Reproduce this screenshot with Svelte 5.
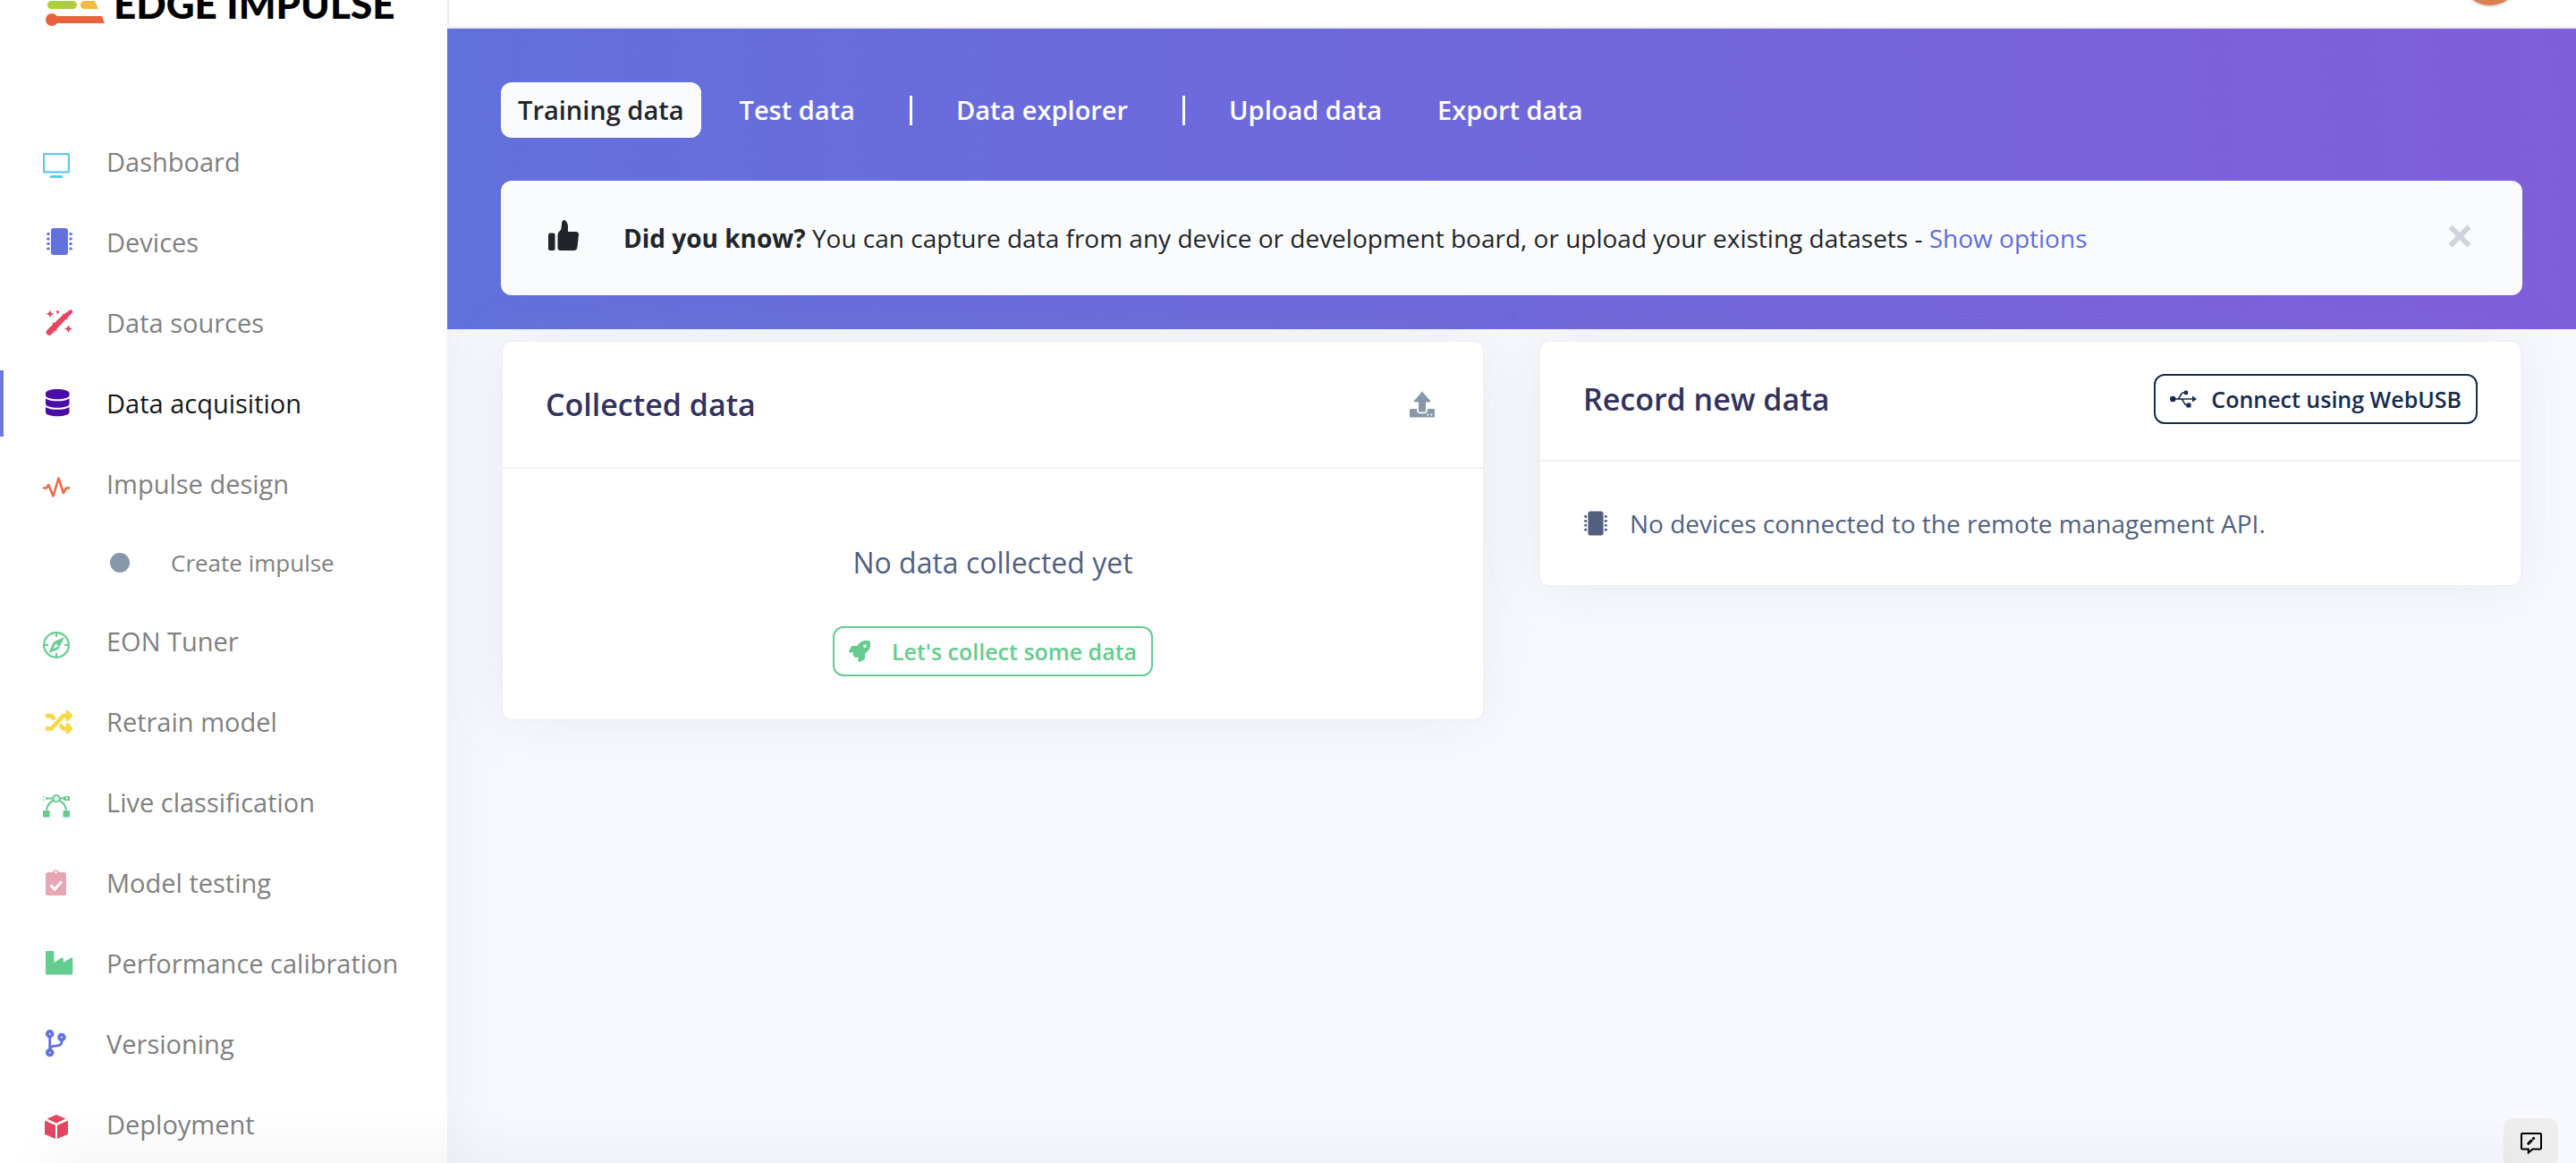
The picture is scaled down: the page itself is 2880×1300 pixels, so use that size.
<script>
  const nav = [
    { label: 'Dashboard', icon: 'screen', color: '#5bcbea' },
    { label: 'Devices', icon: 'chip', color: '#6371dc' },
    { label: 'Data sources', icon: 'wand', color: '#e4475f' },
    { label: 'Data acquisition', icon: 'database', color: '#4a0ca6', active: true },
    { label: 'Impulse design', icon: 'pulse', color: '#ec6a48' },
    { label: 'Create impulse', icon: 'dot', color: '#8898aa', sub: true },
    { label: 'EON Tuner', icon: 'compass', color: '#65cc90' },
    { label: 'Retrain model', icon: 'shuffle', color: '#fad643' },
    { label: 'Live classification', icon: 'bezier', color: '#65cc90' },
    { label: 'Model testing', icon: 'clipboard', color: '#e8a5b4' },
    { label: 'Performance calibration', icon: 'factory', color: '#65cc90' },
    { label: 'Versioning', icon: 'branch', color: '#6371dc' },
    { label: 'Deployment', icon: 'box', color: '#e4475f' }
  ];
  const tabs = [
    { label: 'Training data', active: true },
    { label: 'Test data', divider: true },
    { label: 'Data explorer', divider: true },
    { label: 'Upload data' },
    { label: 'Export data' }
  ];
  let showTip = $state(true);
</script>

{#snippet chip()}
  <rect x="6" y="0" width="19" height="30" rx="3" />
  <path d="M4.500 5h-2l-2 1.500 2 1.500h2zM4.500 10.500h-2l-2 1.500 2 1.500h2zM4.500 16h-2l-2 1.500 2 1.500h2zM4.500 21.500h-2l-2 1.500 2 1.500h2zM26.500 5h2l2 1.500-2 1.500h-2zM26.500 10.500h2l2 1.500-2 1.500h-2zM26.500 16h2l2 1.500-2 1.500h-2zM26.500 21.500h2l2 1.500-2 1.500h-2z" />
{/snippet}

{#snippet icon(name)}
  {#if name === 'screen'}
    <path d="M1.500 0h27A1.500 1.500 0 0 1 30 1.500v19.500a1.500 1.500 0 0 1-1.500 1.500h-27A1.500 1.500 0 0 1 0 21V1.500A1.500 1.500 0 0 1 1.500 0zM2.200 2.200v18.100h25.600V2.200zM9 25h12a1.500 1.500 0 0 1 0 3H9a1.500 1.500 0 0 1 0-3z" transform="translate(0 10)" fill-rule="evenodd" />
  {:else if name === 'chip'}
    <g transform="translate(3 4)">{@render chip()}</g>
  {:else if name === 'wand'}
    <g transform="translate(3 5)">
      <path d="M27.300.6a2 2 0 0 1 2.700 2.800L24.500 9l.3 1.800-2.500.4-9.800 10.200.3 2-2.500.4-4 4.200a3.500 3.500 0 0 1-5-4.800l6.500-6.300-.1-2.200 2.400.1L19 6.300l-.1-1.200 1.500.1z" />
      <path d="M5 .5l1.300 3 3 1.300-3 1.400-1.300 3-1.300-3-3-1.400 3-1.300zM13.500 0l.8 2 2 .8-2 .8-.8 2-.8-2-2-.8 2-.8zM25.500 17l1.400 3.200 3.100 1.300-3.100 1.400-1.400 3.100-1.300-3.100-3.200-1.400 3.200-1.300z" />
    </g>
  {:else if name === 'database'}
    <path transform="translate(3 4) scale(.0592)" d="M448 73.143v45.714C448 159.143 347.667 192 224 192S0 159.143 0 118.857V73.143C0 32.857 100.333 0 224 0s224 32.857 224 73.143zM448 176v102.857C448 319.143 347.667 352 224 352S0 319.143 0 278.857V176c48.125 33.143 136.208 48.572 224 48.572S399.874 209.143 448 176zm0 160v102.857C448 479.143 347.667 512 224 512S0 479.143 0 438.857V336c48.125 33.143 136.208 48.572 224 48.572S399.874 369.143 448 336z" />
  {:else if name === 'pulse'}
    <path d="M0 24.500h4l2.200-3.500 5.300 12.500 6-20 5.300 16.500 3.400-5.500H30" fill="none" stroke="currentColor" stroke-width="2.600" stroke-linejoin="round" />
  {:else if name === 'dot'}
    <circle cx="11" cy="20" r="11" />
  {:else if name === 'compass'}
    <g transform="translate(0 9)">
      <circle cx="15" cy="15" r="13.900" fill="none" stroke="currentColor" stroke-width="2.200" />
      <path d="M14 2h2v4h-2zM14 24h2v4h-2zM2 14h4v2H2zM24 14h4v2h-4z" />
      <path d="M24 6L17.500 19.500 6.500 24 12 11.500zM14.200 13.200l-2.700 6 6.200-3z" fill-rule="evenodd" />
    </g>
  {:else if name === 'shuffle'}
    <path transform="translate(3 5) scale(.0592)" d="M504.971 359.029c9.373 9.373 9.373 24.569 0 33.941l-80 79.984c-15.010 15.010-40.971 4.490-40.971-16.971V416h-58.785a12.004 12.004 0 0 1-8.773-3.812l-70.556-75.596 53.333-57.143L352 336h32v-39.981c0-21.438 25.943-31.998 40.971-16.971l80 79.981zM12 176h84l52.781 56.551 53.333-57.143-70.556-75.596A11.999 11.999 0 0 0 122.785 96H12c-6.627 0-12 5.373-12 12v56c0 6.627 5.373 12 12 12zm372 0v39.984c0 21.460 25.961 31.980 40.971 16.971l80-79.984c9.373-9.373 9.373-24.569 0-33.941l-80-79.981C409.943 24.021 384 34.582 384 56.019V96h-58.785a12.004 12.004 0 0 0-8.773 3.812L96 336H12c-6.627 0-12 5.373-12 12v56c0 6.627 5.373 12 12 12h110.785c3.326 0 6.503-1.381 8.773-3.812L352 176h32z" />
  {:else if name === 'bezier'}
    <g transform="translate(0 11)">
      <path d="M4 17.500C5 11 8.500 8 12 6.500M26 17.500C25 11 21.500 8 18 6.500" fill="none" stroke="currentColor" stroke-width="2.200" />
      <circle cx="15" cy="4.500" r="3.600" fill="none" stroke="currentColor" stroke-width="2" />
      <path d="M5 3.500h6v2H5zM19 3.500h6v2h-6z" />
      <path d="M0 2h1.500v1.200H0zM0 5.500h1.500v1.200H0zM2.500 4.400L5 2.200v4.500zM24 2h6v5h-6l-2-2.500zM26 3.300v2.300h1.600V3.300z" fill-rule="evenodd" />
      <rect x="0" y="18" width="7.500" height="7.500" rx="1.200" /><rect x="22.500" y="18" width="7.500" height="7.500" rx="1.200" />
    </g>
  {:else if name === 'clipboard'}
    <g transform="translate(3 4)">
      <path d="M2.500 4H8a3.600 3.600 0 0 1 7 0h5.500A2.500 2.500 0 0 1 23 6.500v21a2.500 2.500 0 0 1-2.500 2.500h-18A2.500 2.500 0 0 1 0 27.500v-21A2.500 2.500 0 0 1 2.500 4zM11.500 2.600a1.300 1.300 0 1 0 0 2.600 1.300 1.300 0 0 0 0-2.600z" fill-rule="evenodd" />
      <path d="M5.500 18.500l4.500 4.500 8-8.500" fill="none" stroke="#fff" stroke-width="3.200" />
    </g>
  {:else if name === 'factory'}
    <path transform="translate(3 4) scale(.0592)" d="M475.115 163.781L336 252.309v-68.280c0-18.916-20.931-30.399-36.885-20.248L160 252.309V56c0-13.255-10.745-24-24-24H24C10.745 32 0 42.745 0 56v400c0 13.255 10.745 24 24 24h464c13.255 0 24-10.745 24-24V184.029c0-18.917-20.931-30.399-36.885-20.248z" />
  {:else if name === 'branch'}
    <path transform="translate(3 4) scale(.0592)" d="M384 144c0-44.200-35.800-80-80-80s-80 35.800-80 80c0 36.400 24.300 67.100 57.500 76.800-.6 16.100-4.200 28.500-11 36.900-15.400 19.200-49.300 22.400-85.200 25.700-28.200 2.600-57.400 5.400-81.300 16.900v-144c32.500-10.200 56-40.500 56-76.300 0-44.200-35.800-80-80-80S0 35.800 0 80c0 35.800 23.500 66.100 56 76.300v199.300C23.500 365.900 0 396.200 0 432c0 44.200 35.800 80 80 80s80-35.800 80-80c0-34-21.200-63.100-51.200-74.600 3.100-5.200 7.800-9.800 14.900-13.400 16.200-8.200 40.400-10.400 66.100-12.800 42.200-3.900 90-8.400 118.200-43.400 14-17.400 21.100-39.800 21.600-67.900 31.600-10.800 54.400-40.700 54.400-75.900zM80 64c8.800 0 16 7.200 16 16s-7.200 16-16 16-16-7.200-16-16 7.200-16 16-16zm0 384c-8.800 0-16-7.200-16-16s7.200-16 16-16 16 7.200 16 16-7.200 16-16 16zm224-320c8.800 0 16 7.200 16 16s-7.200 16-16 16-16-7.200-16-16 7.200-16 16-16z" />
  {:else if name === 'box'}
    <path transform="translate(2 9)" d="M13 0l10.500 4.500L13 9.500 2.500 4.500zM0 6.500l12 5.300V27L0 21.800zM26 6.500l-12 5.300V27l12-5.200z" />
  {/if}
{/snippet}

<div class="app">
  <aside class="sidebar">
    <a class="brand" href="#home" aria-label="Edge Impulse home">
      <svg class="mark" viewBox="0 0 68 60" aria-hidden="true">
        <rect x="3" y="13" width="40" height="9" rx="4" fill="#f5ba43" />
        <rect x="2" y="32" width="33" height="9" rx="4.500" fill="#abcf3e" />
        <path d="M43.500 32H55l4 9H43.500a4.500 4.500 0 0 1 0-9z" fill="#f5ba43" />
        <circle cx="7" cy="53" r="7" fill="#e8633c" />
        <path d="M7 49h56l3 8H7z" fill="#e8633c" />
      </svg>
      <span>EDGE IMPULSE</span>
    </a>
    <nav aria-label="Main">
      {#each nav as item}
        <a href="#{item.icon}" class="link" class:active={item.active} class:sub={item.sub} aria-current={item.active ? 'page' : undefined}>
          <svg class="glyph" viewBox="0 0 36 40" aria-hidden="true" fill="currentColor" style:color={item.color}>{@render icon(item.icon)}</svg>
          <span>{item.label}</span>
        </a>
      {/each}
    </nav>
  </aside>

  <main>
    <div class="topbar"><button class="avatar" aria-label="Account"></button></div>
    <header class="hero">
      <nav class="tabs" aria-label="Data">
        {#each tabs as tab}
          <a href="#tab" class="tab" class:current={tab.active}>{tab.label}</a>
          {#if tab.divider}<span class="divider"></span>{/if}
        {/each}
      </nav>
      {#if showTip}
        <div class="tip">
          <svg class="thumb" viewBox="0 0 34 34" aria-hidden="true" fill="currentColor">
            <rect x="0" y="14.500" width="7.500" height="19.500" rx="2" />
            <path d="M10.500 17.500c0-3 1-4 2.500-5.500 2-2 1.500-4.500 2.200-9.500C15.500.8 16.500 0 17.700 0c2.300.6 4.300 3.500 4.300 7.500v5.500h9c2 0 3.200 1.300 3 3.200l-1.600 14.600c-.3 2-1.500 3.200-3.500 3.200H13.500c-2 0-3-1.200-3-3z" />
          </svg>
          <p><strong>Did you know?</strong> You can capture data from any device or development board, or upload your existing datasets - <a href="#options">Show options</a></p>
          <button class="close" aria-label="Dismiss" onclick={() => (showTip = false)}>
            <svg viewBox="0 0 24 24" aria-hidden="true"><path d="M3 3l18 18M21 3L3 21" stroke="currentColor" stroke-width="5" fill="none" /></svg>
          </button>
        </div>
      {/if}
    </header>

    <div class="cards">
      <section class="card">
        <div class="head tall">
          <h2>Collected data</h2>
          <button class="upload" aria-label="Upload data">
            <svg viewBox="0 0 40 40" fill="currentColor" aria-hidden="true">
              <path d="M20 5.500l9 10.500c.5.800 0 1.500-.8 1.500H24v9.500c0 1-.6 1.500-1.500 1.500h-5c-.9 0-1.500-.5-1.500-1.500v-9.500h-4.200c-.8 0-1.300-.7-.8-1.500z" />
              <path d="M7.500 25h6.700v2c0 2 1.300 3.300 3.300 3.300h5c2 0 3.300-1.300 3.300-3.300v-2h6.700c1 0 1.500.5 1.500 1.500v6.500c0 1-.5 1.500-1.500 1.500h-25c-1 0-1.500-.5-1.500-1.500v-6.500c0-1 .5-1.500 1.500-1.500zM25.500 30.500v2h1.800v-2zM29.500 30.500v2h1.800v-2z" fill-rule="evenodd" />
            </svg>
          </button>
        </div>
        <div class="body empty">
          <p>No data collected yet</p>
          <button class="btn green">
            <svg viewBox="0 0 512 512" fill="currentColor" aria-hidden="true"><path d="M505.120 19.094c-1.189-5.531-6.658-11-12.207-12.188C460.716 0 435.507 0 410.407 0 307.175 0 245.269 55.203 199.052 128H94.838c-16.348.016-35.557 11.875-42.887 26.484L2.516 253.297A28.400 28.400 0 0 0 0 264a24 24 0 0 0 24 24h103.816l-22.474 22.469c-11.365 11.361-12.996 32.258 0 45.250l50.904 50.906c11.156 11.187 32.156 13.156 45.277 0l22.475-22.469V488a24 24 0 0 0 24 24 28.560 28.560 0 0 0 10.707-2.516l98.728-49.390c14.629-7.297 26.508-26.500 26.508-42.860V312.797c72.598-46.313 128.035-108.406 128.035-211.094 0-25.203 0-50.406-6.856-82.609zM384 168a40 40 0 1 1 40-40 40 40 0 0 1-40 40z" /></svg>
            Let's collect some data
          </button>
        </div>
      </section>

      <section class="card">
        <div class="head">
          <h2>Record new data</h2>
          <button class="btn navy">
            <svg class="usb" viewBox="0 0 30 24" aria-hidden="true">
              <path d="M3 12h23M8 12c4 0 3-7 7-7h3M12 12c4 0 3 7 7 7h3" fill="none" stroke="currentColor" stroke-width="1.600" />
              <circle cx="3.300" cy="12" r="3.300" fill="currentColor" /><circle cx="18" cy="5" r="2.400" fill="currentColor" />
              <path d="M18.500 16.500h5v5h-5zM25 8.500l5 3.500-5 3.500z" fill="currentColor" />
            </svg>
            Connect using WebUSB
          </button>
        </div>
        <div class="body device">
          <svg class="chip" viewBox="0 0 31 30" fill="currentColor" aria-hidden="true">{@render chip()}</svg>
          <p>No devices connected to the remote management API.</p>
        </div>
      </section>
    </div>
  </main>

  <button class="feedback" aria-label="Send feedback">
    <svg viewBox="0 0 24 24" aria-hidden="true" fill="none" stroke="#000" stroke-width="2">
      <path d="M2 1h20a1 1 0 0 1 1 1v15.500a1 1 0 0 1-1 1h-8.500L8.800 22.500v-4H2a1 1 0 0 1-1-1V2a1 1 0 0 1 1-1z" />
      <path d="M8.800 12.300l3.200-3.200M14.300 6.800l.4-.4" stroke-width="3" stroke-linecap="round" />
    </svg>
  </button>
  <div class="shade"></div>
</div>

<style>
  :global(body) { margin: 0; background: #f8f9fe; overflow: hidden; }
  .app { display: grid; grid-template-columns: 500px minmax(0, 1fr); min-height: 100vh; font: 400 28px/42px 'Open Sans', 'Noto Sans', sans-serif; color: #525f7f; }
  .app * { box-sizing: border-box; }
  a { text-decoration: none; color: inherit; }
  p, h2 { margin: 0; }
  svg { display: block; flex: none; }
  button { font: inherit; color: inherit; background: none; border: 0; padding: 0; cursor: pointer; }

  .sidebar { background: #fff; box-shadow: 0 0 64px rgba(136, 152, 170, .15); height: 100vh; }
  .brand { display: flex; align-items: flex-end; gap: 8px; height: 60px; margin: -31px 0 115px 51px; color: #000; font: 900 44px/50px Lato, sans-serif; white-space: nowrap; }
  .mark { width: 68px; height: 60px; }
  .sidebar nav { display: flex; flex-direction: column; gap: 16px; }
  .link { display: flex; align-items: center; height: 74px; padding-left: 44px; border-left: 4px solid transparent; gap: 35px; color: #808080; line-height: 40px; font-size: 29px; white-space: nowrap; }
  .link.active { border-left-color: #6b78de; color: #181818; }
  .link.sub { height: 70px; padding-left: 119px; gap: 32px; font-size: 26px; }
  .glyph { width: 36px; height: 40px; }

  main { min-width: 0; }
  .topbar { display: flex; justify-content: flex-end; height: 32px; padding-right: 61px; background: #fff; border-bottom: 2px solid #e9e9ef; border-left: 2px solid #e9e9ef; }
  .avatar { width: 70px; height: 70px; margin-top: -62px; border-radius: 50%; background: #db7f51; border: 2px solid #dfe3ee; }
  .hero { padding: 60px 60px 38px; background: linear-gradient(87deg, #6271dc, #7f5edb); }
  .tabs { display: flex; align-items: center; gap: 24px; margin-bottom: 48px; }
  .tab { padding: 10px 19px; border-radius: 12px; color: #fff; font-size: 29px; font-weight: 600; white-space: nowrap; }
  .tab.current { background: #fafbfe; color: #212529; }
  .divider { width: 3px; height: 33px; margin: 0 6px 0 18px; background: #fff; }
  .tip { display: flex; align-items: center; min-height: 128px; padding: 0 56px 0 53px; border-radius: 12px; background: #fafbfd; color: #212529; }
  .thumb { width: 34px; height: 34px; margin: 0 50px 6px 0; }
  .tip p { flex: 1; }
  .tip strong { font-weight: 700; }
  .tip a { color: #5e6edb; }
  .close { color: #ced4da; padding-bottom: 4px; }
  .close svg { width: 28px; height: 28px; }

  .cards { display: grid; grid-template-columns: repeat(2, minmax(0, 1fr)); gap: 60px; align-items: start; padding: 12px 60px; }
  .card { border: 2px solid #f0f1f4; border-radius: 12px; background: #fff; box-shadow: 0 0 64px rgba(136, 152, 170, .15); background-clip: padding-box; }
  .head { display: flex; align-items: center; justify-content: space-between; padding: 36px 48px 40px; border-bottom: 2px solid #f1f1f2; }
  .head.tall { padding: 45px 48px; }
  h2 { font-size: 34px; line-height: 50px; font-weight: 600; color: #32325d; }
  .upload { color: #8898aa; }
  .upload svg { width: 40px; height: 40px; }
  .body { padding: 48px; }
  .empty { display: flex; flex-direction: column; align-items: center; padding-top: 82px; }
  .empty p { font-size: 32px; line-height: 46px; margin-bottom: 48px; }
  .btn { display: flex; align-items: center; height: 56px; padding: 0 16px; gap: 24px; border: 2px solid currentColor; border-radius: 12px; font-size: 25px; font-weight: 600; line-height: 36px; white-space: nowrap; }
  .btn svg { width: 24px; height: 24px; }
  .btn .usb { width: 30px; }
  .green { color: #65cc90; }
  .navy { color: #172b4d; gap: 16px; }
  .device { display: flex; align-items: center; gap: 24px; }
  .chip { width: 28px; height: 30px; }

  .feedback { position: fixed; right: 20px; bottom: -8px; display: flex; justify-content: center; width: 61px; height: 58px; padding-top: 16px; border-radius: 12px; background: #eee; }
  .feedback svg { width: 24px; height: 24px; }
  .shade { position: fixed; left: 60px; right: 60px; bottom: -10px; height: 10px; box-shadow: 0 0 60px 4px rgba(0, 0, 0, .12); pointer-events: none; }
</style>
